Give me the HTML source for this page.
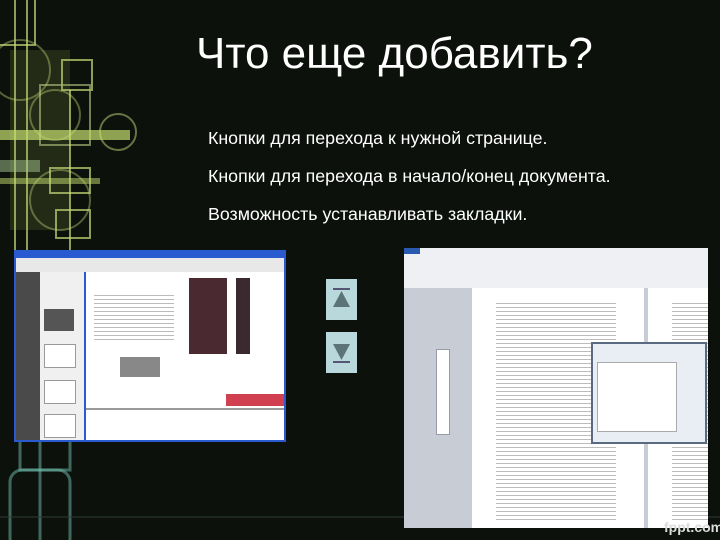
<!DOCTYPE html>
<html><head><meta charset="utf-8"><style>
body{margin:0;width:720px;height:540px;background:#0d110c;overflow:hidden;position:relative;font-family:"Liberation Sans",sans-serif}
.a{position:absolute}
.t{color:#fff;font-size:44px;left:196px;top:29px;white-space:nowrap}
.b{color:#fff;font-size:17.8px;left:208px;white-space:nowrap}
</style></head><body>
<svg class="a" style="left:0;top:0" width="720" height="540">
<rect x="10" y="50" width="60" height="180" fill="#3a4420" opacity=".5"/>
<g fill="none" stroke="#c8d878" stroke-opacity=".7" stroke-width="2">
<rect x="-5" y="-5" width="40" height="50"/>
<rect x="62" y="60" width="30" height="30"/>
<rect x="40" y="85" width="50" height="60" stroke="#a0b070"/>
<circle cx="20" cy="70" r="30" stroke-opacity=".4"/>
<circle cx="55" cy="115" r="25" stroke-opacity=".4"/>
<circle cx="118" cy="132" r="18" stroke-opacity=".5"/>
<circle cx="60" cy="200" r="30" stroke-opacity=".4"/>
<rect x="50" y="168" width="40" height="25"/>
<rect x="56" y="210" width="34" height="28"/>
<line x1="15" y1="0" x2="15" y2="250"/>
<line x1="27" y1="0" x2="27" y2="250"/>
<line x1="70" y1="90" x2="70" y2="250"/>
</g>
<rect x="0" y="130" width="130" height="10" fill="#c8e070" opacity=".7"/>
<rect x="0" y="178" width="100" height="6" fill="#c8e070" opacity=".5"/>
<rect x="0" y="160" width="40" height="12" fill="#a8c890" opacity=".5"/>
<g fill="none" stroke="#70c0b0" stroke-opacity=".5" stroke-width="3">
<rect x="10" y="470" width="60" height="80" rx="12"/>
<rect x="20" y="430" width="50" height="40"/>
<line x1="40" y1="440" x2="40" y2="540"/>
</g>
<line x1="0" y1="517" x2="720" y2="517" stroke="#2a3a3a" stroke-width="1"/>
</svg>
<div class="a t">Что еще добавить?</div>
<div class="a b" style="top:128px">Кнопки для перехода к нужной странице.</div>
<div class="a b" style="top:166px">Кнопки для перехода в начало/конец документа.</div>
<div class="a b" style="top:204px">Возможность устанавливать закладки.</div>

<div class="a" style="left:14px;top:250px;width:272px;height:192px;background:#2a5ad0">
 <div class="a" style="left:2px;top:8px;width:268px;height:14px;background:#e8e8e8"></div>
 <div class="a" style="left:2px;top:22px;width:24px;height:168px;background:#4a4a4a"></div>
 <div class="a" style="left:26px;top:22px;width:44px;height:168px;background:#f0f0f0">
  <div class="a" style="left:4px;top:37px;width:30px;height:22px;background:#555"></div>
  <div class="a" style="left:4px;top:72px;width:30px;height:22px;background:#fff;border:1px solid #999"></div>
  <div class="a" style="left:4px;top:108px;width:30px;height:22px;background:#fff;border:1px solid #999"></div>
  <div class="a" style="left:4px;top:142px;width:30px;height:22px;background:#fff;border:1px solid #999"></div>
 </div>
 <div class="a" style="left:72px;top:22px;width:198px;height:168px;background:#fff">
  <div class="a" style="left:103px;top:6px;width:38px;height:76px;background:#4a2a30"></div>
  <div class="a" style="left:150px;top:6px;width:14px;height:76px;background:#3a2a30"></div>
  <div class="a" style="left:34px;top:85px;width:40px;height:20px;background:#888"></div>
  <div class="a" style="left:8px;top:20px;width:80px;height:50px;background:repeating-linear-gradient(#fff 0 3px,#bbb 3px 4px)"></div>
  <div class="a" style="left:140px;top:122px;width:58px;height:12px;background:#d04050"></div>
  <div class="a" style="left:0;top:136px;width:198px;height:2px;background:#999"></div>
 </div>
</div>

<div class="a" style="left:326px;top:279px;width:31px;height:41px;background:#b8d8dc"></div>
<svg class="a" style="left:326px;top:279px" width="31" height="41"><rect x="7" y="9" width="17" height="2" fill="#557"/><polygon points="15.5,12 7,28 24,28" fill="#5c7478"/></svg>
<div class="a" style="left:326px;top:332px;width:31px;height:41px;background:#b8d8dc"></div>
<svg class="a" style="left:326px;top:332px" width="31" height="41"><polygon points="7,12 24,12 15.5,28" fill="#5c7478"/><rect x="7" y="29" width="17" height="2" fill="#557"/></svg>

<div class="a" style="left:404px;top:248px;width:304px;height:280px;background:#c8ccd4">
 <div class="a" style="left:0;top:0;width:304px;height:40px;background:#eef0f4"></div>
 <div class="a" style="left:0;top:0;width:16px;height:6px;background:#2a5ab0"></div>
 <div class="a" style="left:68px;top:40px;width:172px;height:240px;background:#fff">
  <div class="a" style="left:24px;top:12px;width:120px;height:222px;background:repeating-linear-gradient(#fff 0 3px,#bbb 3px 4px)"></div>
 </div>
 <div class="a" style="left:244px;top:40px;width:60px;height:240px;background:#fff">
  <div class="a" style="left:24px;top:12px;width:36px;height:222px;background:repeating-linear-gradient(#fff 0 3px,#bbb 3px 4px)"></div>
 </div>
 <div class="a" style="left:32px;top:101px;width:12px;height:84px;background:#fff;border:1px solid #99a"></div>
 <div class="a" style="left:187px;top:94px;width:112px;height:98px;background:#e8eef4;border:2px solid #5a6a80">
  <div class="a" style="left:4px;top:18px;width:78px;height:68px;background:#fff;border:1px solid #aaa"></div>
 </div>
</div>
<div class="a" style="left:664px;top:519px;color:#ddd;font-size:14px;font-weight:bold">fppt.com</div>
</body></html>
